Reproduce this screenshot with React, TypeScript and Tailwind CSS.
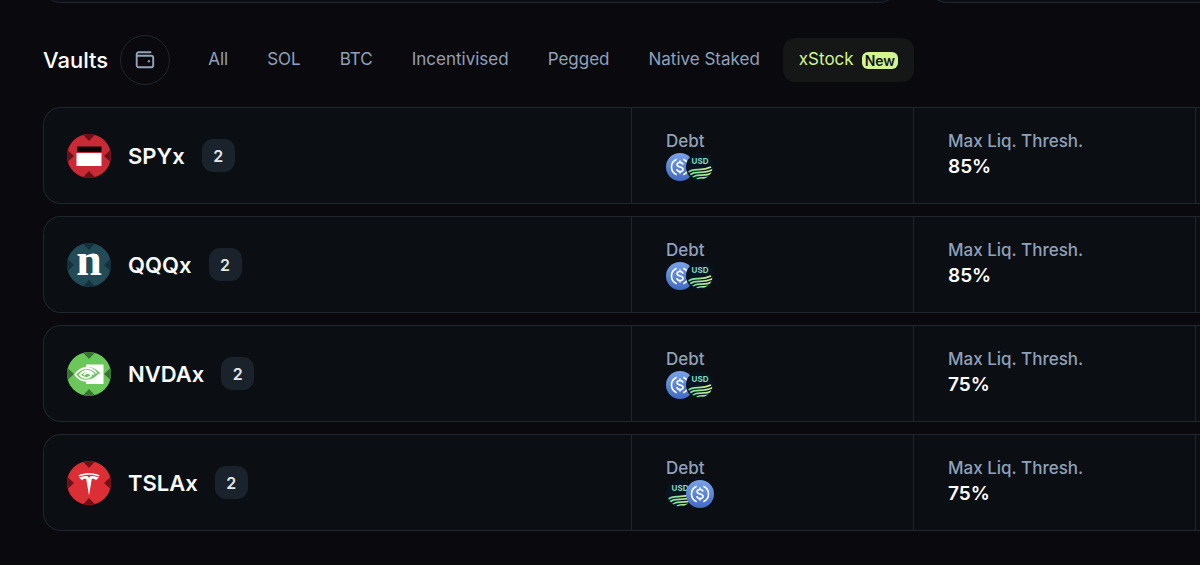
import { useId, useState, type ReactNode } from "react";

type Coin = "usdc" | "usdg";

interface Vault {
  name: string;
  count: number;
  debt: Coin[];
  threshold: string;
  color: string;
  notch: string;
  mark: ReactNode;
}

const TABS = ["All", "SOL", "BTC", "Incentivised", "Pegged", "Native Staked", "xStock"];

const VAULTS: Vault[] = [
  {
    name: "SPYx",
    count: 2,
    debt: ["usdc", "usdg"],
    threshold: "85%",
    color: "#c82a36",
    notch: "#6b0f18",
    mark: (
      <>
        <rect x="10" y="12.5" width="24.500" height="5.5" fill="#0c0508" />
        <rect x="9.500" y="19" width="25" height="13" fill="#fff" />
      </>
    ),
  },
  {
    name: "QQQx",
    count: 2,
    debt: ["usdc", "usdg"],
    threshold: "85%",
    color: "#234b57",
    notch: "#14303a",
    mark: (
      <text x="22" y="31.500" textAnchor="middle" fill="#fff" fontSize="46" fontWeight="700" fontFamily="'Liberation Serif', serif">
        n
      </text>
    ),
  },
  {
    name: "NVDAx",
    count: 2,
    debt: ["usdc", "usdg"],
    threshold: "75%",
    color: "#6cc75a",
    notch: "#397331",
    mark: (
      <>
        <path d="M19 12.500h17.500v19.500H19z" fill="#fff" />
        <path d="M19 15c6.500-.5 11 2.500 14.500 6.500C30 26 25 29.800 19 29.800c-5.500 0-9-3.500-11-7.300C10.500 18.500 14 15.500 19 15z" fill="#6cc75a" />
        <g fill="none" stroke="#fff" strokeWidth="1.900" strokeLinecap="round">
          <path d="M29 20.500c-2.500-3-5.800-4.500-9.500-4.500-5 .3-8.700 3-11.200 6.500 2.700 4 6.200 6.300 11 6.300 5.200-.1 9.700-2.700 13-6.300" />
          <path d="M26.500 22c-2-2.300-4.500-3.200-7-3-3 .2-5.200 1.700-6.700 3.700 1.700 2.300 4 3.300 6.500 3.200 3-.1 4.500-1.600 5-3.200-1.200-1.500-3-2-5-1.600-.8.200-1.500.7-2 1.400" />
        </g>
      </>
    ),
  },
  {
    name: "TSLAx",
    count: 2,
    debt: ["usdg", "usdc"],
    threshold: "75%",
    color: "#dc2f35",
    notch: "#6f0f16",
    mark: (
      <g fill="#fff">
        <path d="M11.500 14.200c6.800-2.500 14.200-2.500 21 0l-.6 1.200c-6.300-2.100-13.500-2.100-19.800 0z" />
        <path d="M12.300 16.300c3-1 5.700-1.300 8-1.300L22 16.700 23.700 15c2.300 0 5 .3 8 1.300-.7 1.500-1.800 2.500-3.200 2.900-.3-1-1.300-1.300-3.700-1.400L22 34.500 19.200 17.800c-2.400.1-3.400.4-3.700 1.400-1.400-.4-2.500-1.400-3.200-2.900z" />
      </g>
    ),
  },
];

function TokenIcon({ vault }: { vault: Vault }) {
  const id = useId();
  return (
    <svg viewBox="0 0 44 44" className="size-11 shrink-0" aria-hidden="true">
      <clipPath id={id}>
        <circle cx="22" cy="22" r="22" />
      </clipPath>
      <g clipPath={`url(#${id})`}>
        <rect width="44" height="44" fill={vault.color} />
        <path
          d="M14.500-1h15L22 7zM14.500 45h15L22 37zM-1 14.500v15L7 22zM45 14.500v15L37 22z"
          fill={vault.notch}
        />
        {vault.mark}
      </g>
    </svg>
  );
}

function UsdcIcon() {
  const id = useId();
  return (
    <svg viewBox="0 0 28 28" className="size-7" role="img" aria-label="Dollar coin">
      <defs>
        <linearGradient id={id} x1="0" y1="0" x2="0" y2="1">
          <stop offset="0" stopColor="#7aa2e8" />
          <stop offset="1" stopColor="#416bc4" />
        </linearGradient>
      </defs>
      <circle cx="14" cy="14" r="14" fill={`url(#${id})`} />
      <g fill="none" stroke="#fff" strokeWidth="1.600">
        <path d="M10.700 6.300a8.300 8.300 0 0 0 0 15.400M17.300 6.300a8.300 8.300 0 0 1 0 15.400" />
        <path d="M17 11.700c-.2-1.500-1.300-2.200-3-2.200-1.800 0-2.900.9-2.900 2.200 0 3.200 6 1.400 6 4.600 0 1.400-1.200 2.300-3.100 2.300s-3-.9-3.200-2.400M14 7.500v2M14 18.500v2" />
      </g>
    </svg>
  );
}

function UsdgIcon() {
  const id = useId();
  return (
    <svg viewBox="0 0 28 28" className="size-7" role="img" aria-label="USD stablecoin">
      <defs>
        <linearGradient id={id} gradientUnits="userSpaceOnUse" x1="3" y1="24" x2="25" y2="15">
          <stop offset="0" stopColor="#62dba0" />
          <stop offset="1" stopColor="#d5f08d" />
        </linearGradient>
        <clipPath id={`${id}c`}>
          <circle cx="14" cy="14" r="12.500" />
        </clipPath>
      </defs>
      <circle cx="14" cy="14" r="14" fill="#0a1420" />
      <text x="14" y="11" textAnchor="middle" fontSize="8" fontWeight="700" fill="#80dfca" fontFamily="Inter, sans-serif">
        USD
      </text>
      <g clipPath={`url(#${id}c)`} fill="none" stroke={`url(#${id})`} strokeWidth="1.700">
        <path d="M2 19.500C8 13.500 14 19.500 25 14" />
        <path d="M2 24C9 15.500 15 22.500 27 16.500" />
        <path d="M4 27C11 18 16 25.500 27 19.500" />
        <path d="M9 28C14 21.500 18 27.500 26 23" />
      </g>
    </svg>
  );
}

function WalletIcon() {
  return (
    <svg viewBox="0 0 20 20" className="size-5" fill="none" stroke="#94a3b8" strokeWidth="1.900" strokeLinecap="round" strokeLinejoin="round" aria-hidden="true">
      <path d="M15.500 2.300H3.700A2 2 0 0 0 1.700 4.300v10.900a2 2 0 0 0 2 2h12.500a2 2 0 0 0 2-2V7.700a2 2 0 0 0-2-2H2" />
      <circle cx="13.800" cy="11.300" r=".8" fill="#94a3b8" strokeWidth="1" />
    </svg>
  );
}

function VaultRow({ vault }: { vault: Vault }) {
  return (
    <li className="grid h-[97px] grid-cols-[minmax(0,1fr)_282px_282px_4px] divide-x divide-[#1f262e] rounded-l-[18px] border-y border-l border-[#1f262e] bg-[#0b0e13]">
      <div className="flex items-center pl-[23px]">
        <TokenIcon vault={vault} />
        <h3 className="ml-[17px] text-[22px] leading-8 font-semibold text-slate-50">{vault.name}</h3>
        <span className="ml-[17px] flex size-[33px] items-center justify-center rounded-[11px] bg-[#1a222c] text-[16px] font-semibold text-slate-200">
          {vault.count}
        </span>
      </div>
      <dl className="pt-[21px] pl-[34px]">
        <dt className="text-[17px] leading-6 font-medium text-slate-400">Debt</dt>
        <dd className="flex -space-x-2">
          {vault.debt.map((coin) => (coin === "usdc" ? <UsdcIcon key={coin} /> : <UsdgIcon key={coin} />))}
        </dd>
      </dl>
      <dl className="pt-[21px] pl-[34px]">
        <dt className="text-[17px] leading-6 font-medium text-slate-400">Max Liq. Thresh.</dt>
        <dd className="text-[19px] leading-7 font-semibold text-white">{vault.threshold}</dd>
      </dl>
      <div />
    </li>
  );
}

export default function App() {
  const [active, setActive] = useState("xStock");

  return (
    <main className="min-h-screen overflow-hidden bg-[#0a0a0e] font-['Inter',sans-serif]">
      <div className="grid grid-cols-[minmax(0,853fr)_minmax(0,271fr)] gap-8 pl-[43px]">
        <div className="h-[3px] overflow-hidden">
          <div className="-mt-8 h-[35px] rounded-[18px] border border-[#1f262e] bg-[#0b0e13]" />
        </div>
        <div className="h-[3px] overflow-hidden">
          <div className="-mt-8 h-[35px] rounded-bl-[18px] border-b border-l border-[#1f262e] bg-[#0b0e13]" />
        </div>
      </div>

      <header className="flex items-center pt-8 pl-[43px]">
        <h2 className="text-[22px] leading-8 font-medium text-white">Vaults</h2>
        <button type="button" aria-label="My vaults" className="ml-3 flex size-[50px] items-center justify-center rounded-full border border-[#1f262e]">
          <WalletIcon />
        </button>
        <nav className="ml-[22px] flex items-center gap-[7px]">
          {TABS.map((tab) => (
            <button
              key={tab}
              type="button"
              aria-pressed={tab === active}
              onClick={() => setActive(tab)}
              className={
                tab === active
                  ? "flex h-11 items-center gap-2 rounded-xl bg-[#141715] px-4 text-[17px] font-normal whitespace-nowrap text-[#d3f58e]"
                  : "flex h-11 items-center gap-2 rounded-xl px-4 text-[17px] font-normal whitespace-nowrap text-slate-400"
              }
            >
              {tab}
              {tab === "xStock" && (
                <span className="rounded-md bg-[#d3f58e] px-[3px] text-[14px] leading-[17px] font-semibold text-[#10150c]">New</span>
              )}
            </button>
          ))}
        </nav>
      </header>

      <ul className="flex flex-col gap-3 pt-[22px] pl-[43px]">
        {VAULTS.map((vault) => (
          <VaultRow key={vault.name} vault={vault} />
        ))}
      </ul>
    </main>
  );
}
